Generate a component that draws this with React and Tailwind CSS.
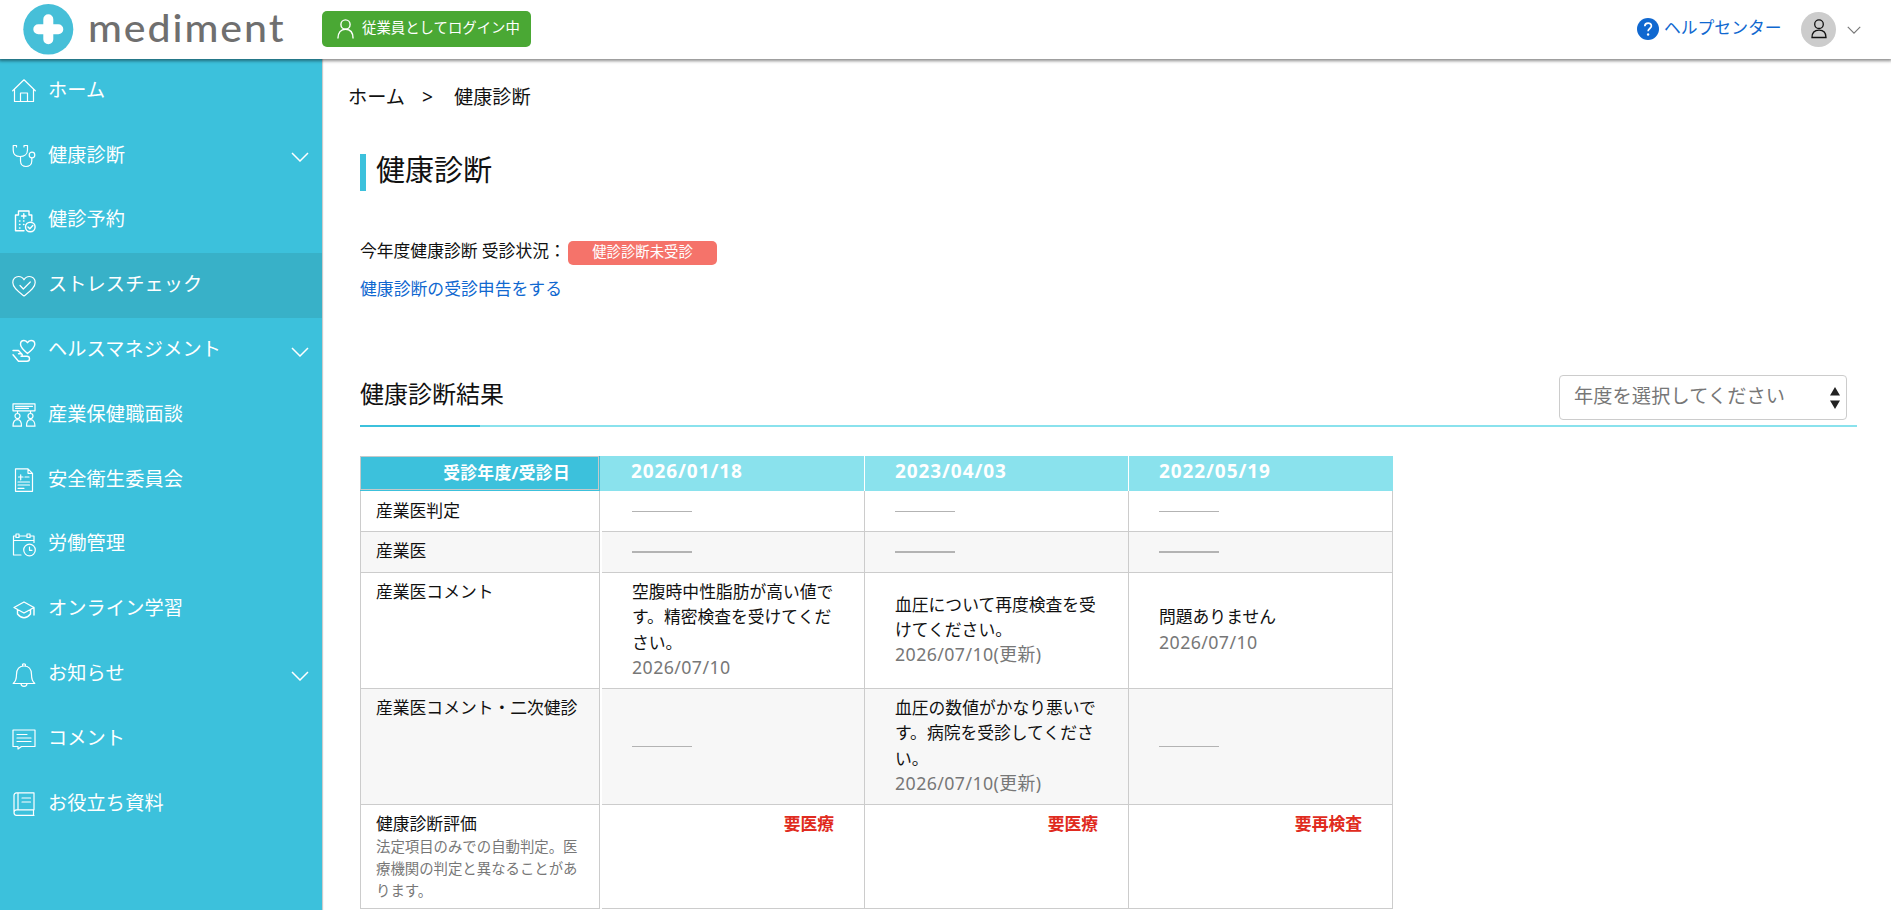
const Ico = ({ children, w = 1.2 }) => (
  <svg viewBox="0 0 24 24" className="h-6 w-6 shrink-0" fill="none" stroke="currentColor" strokeWidth={w} strokeLinecap="round" strokeLinejoin="round">
    {children}
  </svg>
);

const Chevron = ({ className }) => (
  <svg viewBox="0 0 18 10" className={className} fill="none" stroke="currentColor" strokeWidth="1.5">
    <path d="M1 1l8 8 8-8" />
  </svg>
);

const items = [
  { label: "ホーム", icon: <Ico><path d="M.7 11.8 12 .8l11.3 11M2.5 10.5V22.500h19V10.500M8.500 22.500v-8.500h7v8.500" /></Ico> },
  { label: "健康診断", more: true, icon: <Ico><path d="M4.500 3V1.500H1.200v4.500c0 4 2.500 6.500 6.800 6.500s7.500-2.500 7.500-6.500V1.500H12V3M8.500 12.500v4.500c0 3.500 2.500 5.500 5.500 5.500s5.800-2 5.800-5.500V14" /><circle cx="20" cy="11" r="2.800" /></Ico> },
  { label: "健診予約", icon: <Ico w={1.4}><path d="M6.500 6V2h10.500v4h2.800v6M6.500 6H3.500v15.800H12M9.500 7h4.500M11.800 4.800v4.400M7.500 12h.5M11.500 12h.5M7.500 15.500h.5M11.500 15.500h.5M7.500 19h.5" /><circle cx="18.300" cy="18" r="4.800" /><path d="m16 18 1.800 1.800 3-3.300" /></Ico> },
  { label: "ストレスチェック", active: true, icon: <Ico><path d="M12 22C7 18 .8 14 .8 8.500.8 5 3.300 2.500 6.500 2.500c2.500 0 4.500 1.300 5.500 3.300 1-2 3-3.300 5.500-3.300 3.200 0 5.700 2.500 5.700 6C23.200 14 17 18 12 22z" /><path d="m8 11.500 3.300 3.500 7-7" /></Ico> },
  { label: "ヘルスマネジメント", more: true, icon: <Ico w={1.4}><path d="M15.500 14.500C12 11.500 8.500 8.500 8.500 5.200 8.500 3 10 1.500 12 1.500c1.500 0 2.800.8 3.500 2.200.7-1.400 2-2.200 3.500-2.200 2.200 0 3.800 1.600 3.800 3.700 0 3.300-3.500 6.300-7.300 9.300z" /><path d="M1 11.500h5.500l3 3.300M1 15.800l5.500 6.500h8.500c1.500 0 2.500-1.200 2.500-2.500s-1-2.500-2.500-2.500H9c2-.5 1.500-2.500 0-2.500H6.500" /></Ico> },
  { label: "産業保健職面談", icon: <Ico><path d="M1 .8h22v7H1zM3.500 3.300h17M3.500 5.300h13M5.500 8v2M18.500 8v2" /><circle cx="5.500" cy="13" r="2.500" /><circle cx="18.500" cy="13" r="2.500" /><path d="M1 23.200c0-4 1.500-6.500 4.500-6.500s4 2.500 4 6.500zM14.500 23.200c0-4 1.500-6.500 4-6.500s4.500 2.500 4.500 6.500z" /></Ico> },
  { label: "安全衛生委員会", icon: <Ico><path d="M3.500.8H16l4.500 4.500v18H3.500zM16 .8v4.500h4.500M6.500 9H11M8.700 6.800v5M13 9h4M6 14h11.500M6 17h11.500M6 20.300h6" /></Ico> },
  { label: "労働管理", icon: <Ico><path d="M9 22H1.500V3H4M7 3h8M18.500 3H22v6.500M1.500 7.500H22M4 1h3v3.500H4zM15 1h3v3.500h-3z" /><circle cx="17.500" cy="17" r="5.800" /><path d="M17.500 14v3.300h2.500" /></Ico> },
  { label: "オンライン学習", icon: <Ico w={1.4}><path d="M12 4 2 9.500 12 15l10-5.500zM22 9.500V17M5.500 11.500V16c2 2.500 4 3.700 6.500 3.700s4.500-1.200 6.500-3.700v-4.500" /></Ico> },
  { label: "お知らせ", more: true, icon: <Ico><path d="M1.200 20.500c2.500-2 3.300-4 3.300-9C4.500 6 7.500 3 12 3s7.500 3 7.500 8.500c0 5 .8 7 3.300 9zM10.500 3V1.800c0-1.300 3-1.300 3 0V3M9 20.500c0 3.800 6 3.800 6 0" /></Ico> },
  { label: "コメント", icon: <Ico><path d="M1 3h22v16.500H9.500L6 22V19.500H1zM5 7.500h10M5 11h14M5 14.500h14" /></Ico> },
  { label: "お役立ち資料", icon: <Ico><path d="M22 .8H4.500C3 .8 2 2 2 3.500v17C2 22 3 23.300 4.500 23.300H22M22 .8v17H4.500C3 17.800 2 19 2 20.500M6 .8v17M21.500 18v5M10 6h8.500M10 10h8.500" /></Ico> },
];

const Dash = ({ thick }) => <div className={`w-[60px] bg-[#b3b3b3] ${thick ? "h-0.5" : "h-px"}`} />;

const Note = ({ text, date }) => (
  <div className="pb-0.5">
    <p>{text}</p>
    <p className="text-[17.8px] tracking-[0.4px] text-[#777]">{date}</p>
  </div>
);

const rows = [
  { h: "h-[41px]", label: "産業医判定", cells: [<Dash />, <Dash />, <Dash />] },
  { h: "h-[41px]", gray: true, label: "産業医", cells: [<Dash thick />, <Dash thick />, <Dash thick />] },
  { h: "h-[116px]", label: "産業医コメント", cells: [
    <Note text="空腹時中性脂肪が高い値です。精密検査を受けてください。" date="2026/07/10" />,
    <Note text="血圧について再度検査を受けてください。" date="2026/07/10(更新)" />,
    <Note text="問題ありません" date="2026/07/10" />,
  ] },
  { h: "h-[116px]", gray: true, label: "産業医コメント・二次健診", cells: [
    <Dash />,
    <Note text="血圧の数値がかなり悪いです。病院を受診してください。" date="2026/07/10(更新)" />,
    <Dash />,
  ] },
  { h: "h-[104px]", label: "健康診断評価", sub: "法定項目のみでの自動判定。医療機関の判定と異なることがあります。", top: true, cells: ["要医療", "要医療", "要再検査"] },
];

export default function App() {
  return (
    <div className="flex h-[910px] flex-col overflow-hidden bg-white font-['Noto_Sans','Noto_Sans_CJK_JP',sans-serif] text-[16.8px] leading-[25.2px] text-[#111]">
      <header className="z-10 flex h-[59px] shrink-0 items-center bg-white pb-px pl-[23px] pr-[30px] shadow-[0_1px_3px_1px_rgba(0,0,0,0.45)]">
        <svg viewBox="0 0 51 51" className="h-[51px] w-[51px] shrink-0">
          <ellipse cx="25.300" cy="25.300" rx="25" ry="25.300" fill="#46bfd8" />
          <path d="M25.300 15.300v20M15.300 25.300h20" stroke="#fff" strokeWidth="10" strokeLinecap="round" />
        </svg>
        <div className="ml-[14px] w-[234px] origin-left scale-x-[1.08] pb-1 font-['Lato',sans-serif] text-[38px] font-medium leading-[50px] tracking-[1.8px] text-[#6f6f6f]">mediment</div>
        <div className="flex h-9 w-[209px] items-center rounded-[5px] bg-[#4aa834] pl-[15px] text-white">
          <svg viewBox="0 0 17 20" className="h-5 w-[17px]" fill="none" stroke="currentColor" strokeWidth="1.400">
            <circle cx="8.500" cy="5.500" r="4.600" />
            <path d="M.9 19.500c0-6 3-9.300 7.600-9.300s7.600 3.300 7.600 9.300" />
          </svg>
          <span className="ml-2 whitespace-nowrap pb-[3px] text-[14.4px]">従業員としてログイン中</span>
        </div>
        <div className="ml-auto flex items-center text-[#1068d0]">
          <svg viewBox="0 0 22 22" className="h-[22px] w-[22px]">
            <circle cx="11" cy="11" r="11" fill="#1068d0" />
            <path d="M7.800 8.300c0-4.300 6.600-4.300 6.600-.3 0 2.400-3.300 2.600-3.300 5.200" fill="none" stroke="#fff" strokeWidth="1.700" />
            <circle cx="11.100" cy="16.500" r="1.200" fill="#fff" />
          </svg>
          <span className="ml-[5px] w-[118px] whitespace-nowrap pb-[3px]">ヘルプセンター</span>
        </div>
        <div className="ml-[19px] flex h-[35px] w-[35px] items-center justify-center rounded-full bg-[#ccc]">
          <svg viewBox="0 0 16 20" className="h-5 w-4" fill="none" stroke="#111" strokeWidth="1.300">
            <circle cx="8" cy="5.200" r="4.300" />
            <path d="M1 18.500c0-5 2.500-7.300 7-7.300s7 2.300 7 7.300z" />
          </svg>
        </div>
        <Chevron className="ml-[11px] mt-0.5 h-2 w-[14px] text-[#777]" />
      </header>

      <div className="flex min-h-0 grow">
        <nav className="w-[322px] shrink-0 bg-[#3cc1dc] text-[19.2px] text-white shadow-[1px_0_1px_rgba(0,0,0,0.2)]">
          {items.map((it) => (
            <a key={it.label} className={`flex h-[64.8px] items-center pl-3 pr-[13px] ${it.active ? "bg-[#38b1c8]" : ""}`}>
              {it.icon}
              <span className="ml-3 pb-1 tracking-[0.1px]">{it.label}</span>
              {it.more && <Chevron className="ml-auto mt-0.5 h-[10px] w-[18px]" />}
            </a>
          ))}
        </nav>

        <main className="flex grow flex-col pl-[38px] pr-[34px]">
          <div className="-ml-3 mt-[25px] flex h-[26px] items-center text-[19.2px]">
            <span>ホーム</span>
            <span className="ml-[17px] w-8">&gt;</span>
            <span>健康診断</span>
          </div>
          <h1 className="mt-[44px] flex h-[37px] items-center border-l-[6px] border-[#3cc1dc] pb-1.5 pl-[10px] text-[29px]">健康診断</h1>
          <div className="mt-[47px] flex h-[26px] items-center">
            <span className="w-[208px] whitespace-nowrap">今年度健康診断 受診状況：</span>
            <span className="mt-1 flex h-6 w-[149px] items-center justify-center rounded-[5px] bg-[#f5736a] pb-0.5 text-[14.4px] text-white">健診診断未受診</span>
          </div>
          <a className="mt-3 leading-[25px] tracking-[0.05px] text-[#1068d0]">健康診断の受診申告をする</a>

          <div className="mt-[74px] flex h-[50px] items-start justify-between pr-[10px]">
            <h2 className="mt-px text-2xl leading-9">健康診断結果</h2>
            <div className="flex h-[45px] w-[288px] items-center justify-between rounded border border-[#ccc] pl-[14px] pr-[6px] text-[19.2px] text-[#777]">
              <span className="pb-1 tracking-[0.1px]">年度を選択してください</span>
              <svg viewBox="0 0 10 22" className="mt-px h-[22px] w-[10px]" fill="#222"><path d="M5 0l5 8.500H0zM5 22l5-8.500H0z" /></svg>
            </div>
          </div>
          <div className="h-0.5 shrink-0 bg-[#8ae2ed]"><div className="h-0.5 w-[120px] bg-[#3cc1dc]" /></div>

          <div className="mt-[29px] w-[1033px]">
            <div className="flex h-[35px] font-bold text-white">
              <div className="w-[240px] border-b border-r border-[#3cc1dc]">
                <div className="h-full border border-[#c4c9ca] bg-[#3cc1dc] pr-[28px] pt-[3px] text-right tracking-[0.3px]">受診年度/受診日</div>
              </div>
              {["2026/01/18", "2023/04/03", "2022/05/19"].map((d, i) => (
                <div key={d} className={`bg-[#8ae2ed] pt-[3px] text-[19px] tracking-[0.9px] ${i === 0 ? "w-[265px] border-r border-white pl-[31px]" : i === 1 ? "w-[264px] border-r border-white pl-[30px]" : "w-[264px] pl-[30px]"}`}>{d}</div>
              ))}
            </div>
            {rows.map((r, n) => (
              <div key={r.label} className={`flex ${r.h}`}>
                <div className={`mr-0.5 w-[240px] border-b border-l border-r border-[#ccc] pl-[15px] pr-[21px] ${n === 0 ? "pt-[7px]" : "pt-[6px]"} ${r.gray ? "bg-[#f7f7f7]" : ""}`}>
                  <p className="whitespace-nowrap">{r.label}</p>
                  {r.sub && <p className="w-[203px] text-[14.4px] leading-[22px] text-[#777]">{r.sub}</p>}
                </div>
                {r.cells.map((c, i) => (
                  <div key={i} className={`flex border-b border-r border-[#ccc] pl-[30px] ${i === 0 ? "w-[263px]" : "w-[264px]"} ${r.top ? "items-start justify-end pr-[30px] pt-[6px] font-bold text-[#e02b20]" : "items-center pr-[29px]"} ${r.gray ? "bg-[#f7f7f7]" : ""}`}>{c}</div>
                ))}
              </div>
            ))}
          </div>
        </main>
      </div>
    </div>
  );
}
